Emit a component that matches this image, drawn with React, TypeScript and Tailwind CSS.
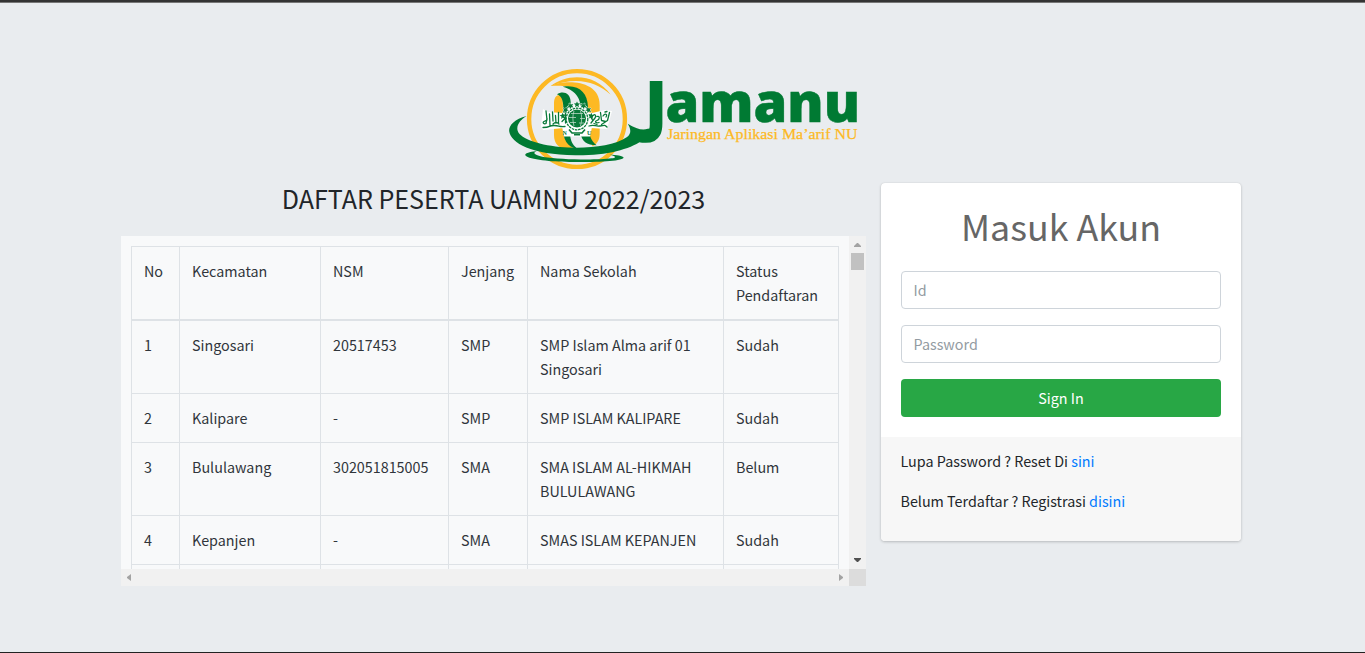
import React from "react";

type School = {
  no: string;
  kecamatan: string;
  nsm: string;
  jenjang: string;
  nama: string;
  status: string;
};

const schools: School[] = [
  { no: "1", kecamatan: "Singosari", nsm: "20517453", jenjang: "SMP", nama: "SMP Islam Alma arif 01 Singosari", status: "Sudah" },
  { no: "2", kecamatan: "Kalipare", nsm: "-", jenjang: "SMP", nama: "SMP ISLAM KALIPARE", status: "Sudah" },
  { no: "3", kecamatan: "Bululawang", nsm: "302051815005", jenjang: "SMA", nama: "SMA ISLAM AL-HIKMAH BULULAWANG", status: "Belum" },
  { no: "4", kecamatan: "Kepanjen", nsm: "-", jenjang: "SMA", nama: "SMAS ISLAM KEPANJEN", status: "Sudah" },
];

const columns = ["No", "Kecamatan", "NSM", "Jenjang", "Nama Sekolah", "Status Pendaftaran"];

function Emblem() {
  const stars = [-78, -52, -26, 0, 26, 52, 78];
  return (
    <g>
      <circle cx="577" cy="119" r="14" fill="#fff" />
      <path d="M543 109L548 112L562 113H592L605 110L612 111L607 129L590 128H564L543 130L541 126Z" fill="#fff" />
      <path d="M562 127H592L590 136.500H564Z" fill="#fff" />
      {stars.map((a) => (
        <path
          key={a}
          transform={`rotate(${a} 577 119)`}
          d="M577 101.200l.9 2.100 2.300.2-1.700 1.500.5 2.200-2-1.200-2 1.200.5-2.200-1.700-1.500 2.300-.2z"
          fill="#0a7a3a"
          stroke="#fff"
          strokeWidth=".8"
          paintOrder="stroke"
        />
      ))}
      <circle cx="577" cy="119" r="10.800" fill="none" stroke="#0a7a3a" strokeWidth="1.300" strokeDasharray="2.500 .8" />
      <circle cx="577" cy="118.500" r="9" fill="#0a7a3a" />
      <path
        d="M571 113.500h12M569 117.500h7M580 118.500h5M570 122.500h6M579 123h5M574 111c-1.500 4-1.500 10 0 15M580.500 111c1.500 4 1.500 10 0 15"
        fill="none"
        stroke="#cfe3d6"
        strokeWidth=".7"
      />
      <g fill="none" stroke="#0a7a3a" strokeWidth="1.300" strokeLinecap="round" strokeLinejoin="round">
        <path d="M546 111l1 9-3 1.500c-2 1 0 3 2 2l1-5M549.500 114l.5 12M552.500 112l.5 9M555.500 115.500l.5 7.500M558.500 112.500v10M562 115.500l3 3-3 3M565.500 113v10M543 127.500c8 0 5-2 11-2s4 1.500 11 1M553 124c2-2 4-2 6 0" />
        <path d="M589.500 115l3 5M592 117c2-4 5-2 3 1l-4 5M597 116.500c3-1 3 3 0 4s-1 3 2 2M600.500 112.500l1 8 4 1M603 116c2-3 5-2 3 1M609.500 112.500l-2 8-6 4M589 126c6-2 6 1 11 0s5-1 7 1M594 123.500l3 1M605 112l2-.5" />
      </g>
      <path d="M569 129.500l3 3.500h10l3-3.500M574 134.800h6" fill="none" stroke="#0a7a3a" strokeWidth="1.600" />
      <g className="font-['Liberation_Serif',serif] text-[6px] font-bold" fill="#0a7a3a">
        <text x="562.500" y="134.500">
          N
        </text>
        <text x="587" y="134.500">
          U
        </text>
      </g>
    </g>
  );
}

function Logo() {
  return (
    <svg className="block h-[104px] w-[356px] overflow-visible" viewBox="506 67 356 104" role="img" aria-label="Jamanu">
      <circle cx="577" cy="119" r="47.900" fill="none" stroke="#fdb924" strokeWidth="4.400" />
      <g transform="translate(500 60) scale(.33333)">
        <path d="M152 78C205 38 288 42 332 104C285 62 228 50 152 78Z" fill="#fdb924" />
        <path
          d="M152 78C185 60 300 55 299 135V220C299 240 292 252 278 259C266 240 262 215 262 190V140C262 100 240 74 152 78Z"
          fill="#fdb924"
        />
        <path d="M188 80C238 72 262 98 264 140L262 165L242 150C243 120 232 92 188 80Z" fill="#007a33" />
        <path d="M243 190V222C244 242 260 256 290 256C272 244 266 222 264 190Z" fill="#007a33" />
        <path d="M162 225V128C163 112 170 102 184 106C189 115 189 130 189 150V205C189 235 200 252 224 266C180 272 162 255 162 225Z" fill="#fdb924" />
        <path d="M171 103C188 91 211 98 212 125V165H190V145C190 120 184 109 171 103Z" fill="#007a33" />
        <path d="M188 195H210V220C211 240 216 254 232 266C202 262 188 240 188 195Z" fill="#007a33" />
        <path
          d="M80 168C40 178 24 200 28 216C34 248 92 284 226 286C320 287 388 268 424 243L446 243L460 205L443 206C428 212 408 206 383 191C392 205 396 220 380 232C340 260 250 268 180 261C110 254 54 234 52 208C51 192 62 179 80 168Z"
          fill="#007a33"
        />
        <path
          d="M110 274C80 276 70 284 79 289C100 302 180 307 230 306C290 306 362 304 371 293C369 287 350 284 328 284C352 289 348 293 335 295C290 301 180 299 130 291C105 286 95 279 110 274Z"
          fill="#007a33"
        />
      </g>
      <Emblem />
      <g fill="#007a33" className="font-['Open_Sans',sans-serif] font-extrabold">
        <text x="644.500" y="128" fontSize="65">
          J
        </text>
        <text x="665.500" y="122" fontSize="55" textLength="194.500" lengthAdjust="spacingAndGlyphs" stroke="#007a33" strokeWidth=".5">
          amanu
        </text>
      </g>
      <text
        x="667"
        y="138.500"
        fontSize="15.500"
        textLength="190.500"
        lengthAdjust="spacingAndGlyphs"
        fill="#fdb924"
        className="font-['Liberation_Serif',serif]"
        stroke="#fdb924"
        strokeWidth=".25"
      >
        Jaringan Aplikasi Ma’arif NU
      </text>
    </svg>
  );
}

function Arrow({ direction, color }: { direction: "up" | "down" | "left" | "right"; color: string }) {
  const shapes = {
    up: "M5 11v-1L8 7h1l3 3v1z",
    down: "M5 6h7v1L9 10H8L5 7z",
    left: "M10 5v7L6 9V8z",
    right: "M7 5v7l4-3V8z",
  };
  return (
    <svg className="block size-[17px]" viewBox="0 0 17 17">
      <path d={shapes[direction]} fill={color} />
    </svg>
  );
}

function Cell({ children }: { children?: React.ReactNode }) {
  return <td className="border-r border-b border-[#dee2e6] p-3 align-top">{children}</td>;
}

function SchoolTable() {
  return (
    <table className="w-[708px] table-fixed border-separate border-spacing-0 border-t border-l border-[#dee2e6] leading-6 text-[#30353b]">
      <colgroup>
        <col className="w-[48px]" />
        <col className="w-[141px]" />
        <col className="w-[128px]" />
        <col className="w-[79px]" />
        <col className="w-[196px]" />
        <col className="w-[115px]" />
      </colgroup>
      <thead>
        <tr>
          {columns.map((c) => (
            <th key={c} className="border-r border-b-2 border-[#dee2e6] p-3 text-left align-top font-normal">
              {c}
            </th>
          ))}
        </tr>
      </thead>
      <tbody>
        {schools.map((s) => (
          <tr key={s.no}>
            <Cell>{s.no}</Cell>
            <Cell>{s.kecamatan}</Cell>
            <Cell>{s.nsm}</Cell>
            <Cell>{s.jenjang}</Cell>
            <Cell>{s.nama}</Cell>
            <Cell>{s.status}</Cell>
          </tr>
        ))}
        <tr className="h-12">
          {columns.map((c) => (
            <Cell key={c} />
          ))}
        </tr>
      </tbody>
    </table>
  );
}

function TablePanel() {
  return (
    <div className="grid h-[350px] w-[745px] grid-cols-[728px_17px] grid-rows-[333px_17px] bg-[#f8f9fa]">
      <div className="overflow-hidden p-2.5">
        <SchoolTable />
      </div>
      <div className="flex flex-col items-center bg-[#f1f1f1]">
        <Arrow direction="up" color="#a3a3a3" />
        <div className="h-[17px] w-[13px] bg-[#c1c1c1]" />
        <div className="flex-1" />
        <Arrow direction="down" color="#505050" />
      </div>
      <div className="flex justify-between bg-[#f1f1f1]">
        <Arrow direction="left" color="#a3a3a3" />
        <Arrow direction="right" color="#a3a3a3" />
      </div>
      <div className="bg-[#dcdcdc]" />
    </div>
  );
}

function LoginCard() {
  const field =
    "block h-[38px] w-full rounded border border-[#ced4da] bg-white px-[11.5px] pb-0.5 placeholder:text-[#939ba2] placeholder:opacity-100 outline-none";
  return (
    <div className="w-[360px] rounded bg-white shadow-[0_0_1px_rgba(0,0,0,0.125),0_1px_3px_rgba(0,0,0,0.2)]">
      <form className="flex flex-col gap-4 p-5">
        <h1 className="mb-2 h-11 text-center text-[35.8px] leading-[44px] text-[#666]">Masuk Akun</h1>
        <input className={field} placeholder="Id" />
        <input className={field} type="password" placeholder="Password" />
        <button type="button" className="h-[38px] w-full rounded bg-[#28a745] font-normal text-white">
          Sign In
        </button>
      </form>
      <div className="flex h-[104px] flex-col gap-4 rounded-b bg-[#f7f7f7] pt-3 pr-5 pl-[19.5px] leading-6">
        <p>
          Lupa Password ? Reset Di <a className="text-[#007bff]">sini</a>
        </p>
        <p>
          Belum Terdaftar ? Registrasi <a className="text-[#007bff]">disini</a>
        </p>
      </div>
    </div>
  );
}

export default function App() {
  return (
    <div className="h-[653px] overflow-hidden border-t-2 border-b border-t-[#343434] border-b-[#222] bg-[#e9ecef] font-['Noto_Sans_CJK_SC',sans-serif] text-[14.33px] text-[#212529]">
      <div className="h-px bg-[#777]" />
      <div className="flex pt-16 pl-[506px]">
        <Logo />
      </div>
      <main className="flex items-start gap-[15px] pt-3 pl-[121px]">
        <section className="w-[745px]">
          <h2 className="mb-[23px] h-[30px] text-center text-[25.07px] leading-[30px]">DAFTAR PESERTA UAMNU 2022/2023</h2>
          <TablePanel />
        </section>
        <LoginCard />
      </main>
    </div>
  );
}
